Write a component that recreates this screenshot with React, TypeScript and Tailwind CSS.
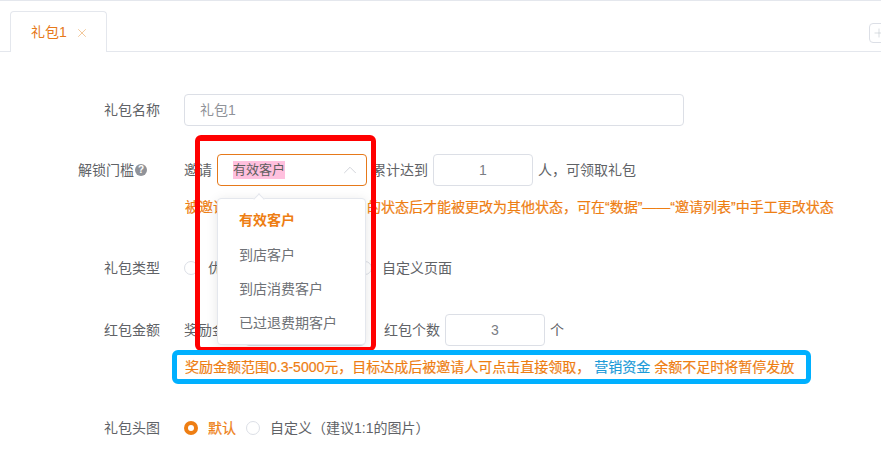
import { ChevronUp, Plus, X } from 'lucide-react';
import type { ReactNode } from 'react';

const Row = ({ label, className, children }: { label?: ReactNode; className: string; children: ReactNode }) => {
  return (
    <div className={`flex h-8 items-center ${className}`}>
      <div className="flex w-[160px] shrink-0 items-center justify-end text-[#606266]">{label}</div>
      <div className="ml-6 flex items-center">{children}</div>
    </div>
  );
};

const Radio = ({ checked, className }: { checked?: boolean; className?: string }) => {
  return checked ? (
    <span className={`flex size-[14px] items-center justify-center rounded-full bg-[#ee7e13] ${className ?? ''}`}>
      <span className="size-[6px] rounded-full bg-white" />
    </span>
  ) : (
    <span className={`size-[14px] rounded-full border border-[#dcdfe6] bg-white ${className ?? ''}`} />
  );
};

const NumberInput = ({ value, className }: { value: string; className?: string }) => {
  return (
    <div
      className={`flex h-8 w-[100px] items-center justify-center rounded border border-[#dcdfe6] text-[#7a7d83] ${className ?? ''}`}
    >
      {value}
    </div>
  );
};

export default function App() {
  const font = "font-['Liberation_Sans','Noto_Sans_CJK_SC',sans-serif]";
  return (
    <div className={`relative h-[468px] w-[881px] overflow-hidden bg-white text-sm text-[#606266] ${font}`}>
      <div className="h-px bg-[#e4e7ed]" />
      <div className="relative flex h-[51px] items-end border-b border-[#e4e7ed] pl-[10px]">
        <div className="mb-[-1px] flex h-[41px] w-[97px] items-center rounded-t border border-b-0 border-[#e4e7ed] bg-white pl-5 text-[#e6791a]">
          礼包1
          <X size={14} strokeWidth={0.9} className="ml-2 mt-px text-[#e6963f]" />
        </div>
        <div className="absolute left-[869px] top-[22px] flex h-5 w-5 items-center justify-center rounded border border-[#dcdfe6] text-[#c0c4cc]">
          <Plus size={14} strokeWidth={1} />
        </div>
      </div>

      <div className="pt-[42px]">
        <Row label="礼包名称" className="">
          <div className="flex h-8 w-[500px] items-center rounded border border-[#dcdfe6] pl-[15px] text-[#909399]">
            礼包1
          </div>
        </Row>

        <Row
          className="mt-7"
          label={
            <>
              解锁门槛
              <span className="ml-px mr-[13px] flex size-3 items-center justify-center rounded-full bg-[#909399] text-[10px] font-bold leading-none text-white">
                ?
              </span>
            </>
          }
        >
          <span>邀请</span>
          <div className="relative z-10 ml-[5px] flex h-8 w-[150px] items-center justify-between rounded border border-[#e6791a] pl-[15px] pr-[5px]">
            <span className="bg-[#ffc0de] text-[13px] text-[#5f5f5f]">有效客户</span>
            <ChevronUp size={22} strokeWidth={0.8} className="text-[#c0c4cc]" />
          </div>
          <span className="ml-[5px]">累计达到</span>
          <NumberInput value="1" className="ml-[5px]" />
          <span className="ml-[5px]">人，可领取礼包</span>
        </Row>

        <div className="ml-[185px] mt-[11px] h-5 whitespace-nowrap leading-5 text-[#ee7e13] [-webkit-text-stroke:0.2px_#ee7e13]">
          被邀请人到店后达到有效客户的状态后才能被更改为其他状态，可在“数据”——“邀请列表”中手工更改状态
        </div>

        <Row label="礼包类型" className="mt-[35px]">
          <Radio />
          <span className="ml-[10px] w-[150px]">优惠券</span>
          <Radio />
          <span className="ml-[10px]">自定义页面</span>
        </Row>

        <Row label="红包金额" className="mt-[30px]">
          <span>奖励金额</span>
          <NumberInput value="" className="ml-[5px] w-[120px]" />
          <span className="ml-[19px]">红包个数</span>
          <NumberInput value="3" className="ml-[5px]" />
          <span className="ml-[5px]">个</span>
        </Row>

        <div className="ml-[185px] mt-[11px] h-5 whitespace-nowrap leading-5 text-[#ee7e13] [-webkit-text-stroke:0.2px_#ee7e13]">
          奖励金额范围0.3-5000元，目标达成后被邀请人可点击直接领取，
          <span className="ml-1 text-[#1d9bd8] [-webkit-text-stroke:0.2px_#1d9bd8]">营销资金</span> 余额不足时将暂停发放
        </div>

        <Row label="礼包头图" className="mt-[35px]">
          <Radio checked />
          <span className="ml-[10px] text-[#ee7e13] [-webkit-text-stroke:0.2px_#ee7e13]">默认</span>
          <Radio className="ml-[10px]" />
          <span className="ml-[10px]">自定义（建议1:1的图片）</span>
        </Row>
      </div>

      {/* dropdown of the select */}
      <div className="absolute left-[217px] top-[198px] z-10 h-[147px] w-[149px] rounded border border-[#e4e7ed] bg-white py-1 text-[#6e7176] shadow-[0_2px_12px_rgba(0,0,0,0.1)]">
        <span className="absolute left-[37px] top-[-4px] size-2 rotate-45 border-l border-t border-[#e4e7ed] bg-white" />
        <div className="flex h-[34px] items-center pl-[21px] font-bold text-[#ee7e13]">有效客户</div>
        <div className="flex h-[35px] items-center pl-[21px]">到店客户</div>
        <div className="flex h-[34px] items-center pl-[21px]">到店消费客户</div>
        <div className="flex h-[33px] items-center pl-[21px]">已过退费期客户</div>
      </div>

      {/* annotation frames drawn over the screenshot */}
      <div className="absolute left-[195px] top-[135px] z-20 h-[216px] w-[181px] rounded-md border-x-[5px] border-b-4 border-t-[6px] border-[#ff0000]" />
      <div className="absolute left-[172px] top-[350px] z-30 h-[34px] w-[639px] rounded-md border-[5px] border-[#00b0ff]" />
    </div>
  );
}
